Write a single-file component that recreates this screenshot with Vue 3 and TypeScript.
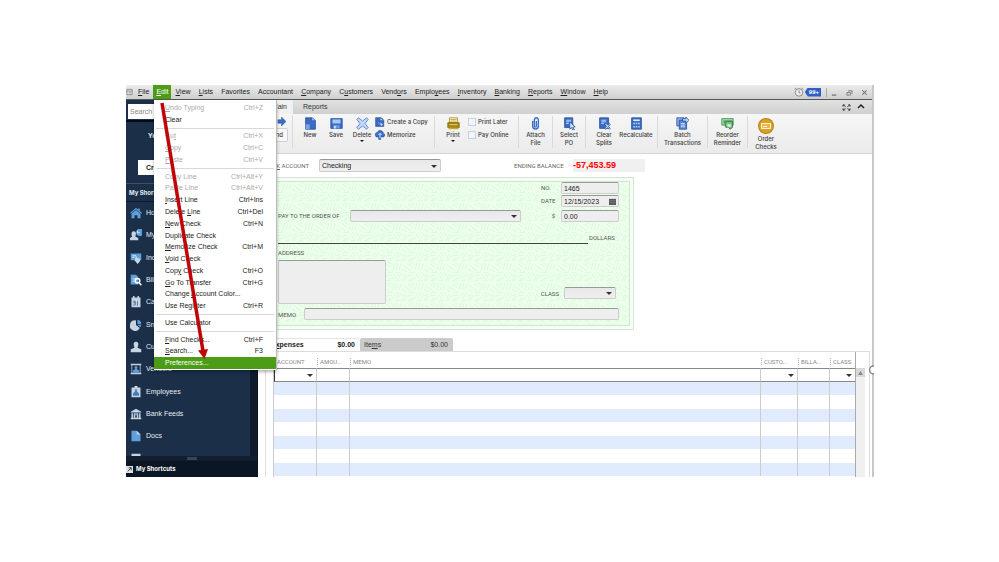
<script setup lang="ts">
import { ref } from 'vue'

interface Shape { d: string; f?: string; s?: string; w?: number }
interface MenuEntry { pre?: string; key?: string; post?: string; shortcut?: string; disabled?: boolean; active?: boolean; sep?: boolean }

const menus = [
  ['', 'F', 'ile'], ['', 'E', 'dit'], ['', 'V', 'iew'], ['', 'L', 'ists'], ['Favorites', '', ''],
  ['Accountant', '', ''], ['', 'C', 'ompany'], ['C', 'u', 'stomers'], ['Vend', 'o', 'rs'], ['Emplo', 'y', 'ees'],
  ['', 'I', 'nventory'], ['', 'B', 'anking'], ['', 'R', 'eports'], ['', 'W', 'indow'], ['', 'H', 'elp'],
]

const editMenu: MenuEntry[] = [
  { key: 'U', post: 'ndo Typing', shortcut: 'Ctrl+Z', disabled: true },
  { pre: 'Clear' },
  { sep: true },
  { pre: 'Cu', key: 't', shortcut: 'Ctrl+X', disabled: true },
  { key: 'C', post: 'opy', shortcut: 'Ctrl+C', disabled: true },
  { key: 'P', post: 'aste', shortcut: 'Ctrl+V', disabled: true },
  { sep: true },
  { pre: 'Copy Line', shortcut: 'Ctrl+Alt+Y', disabled: true },
  { pre: 'Paste Line', shortcut: 'Ctrl+Alt+V', disabled: true },
  { key: 'I', post: 'nsert Line', shortcut: 'Ctrl+Ins' },
  { pre: 'Delete ', key: 'L', post: 'ine', shortcut: 'Ctrl+Del' },
  { key: 'N', post: 'ew Check', shortcut: 'Ctrl+N' },
  { pre: 'Duplicate Check' },
  { key: 'M', post: 'emorize Check', shortcut: 'Ctrl+M' },
  { key: 'V', post: 'oid Check' },
  { pre: 'Cop', key: 'y', post: ' Check', shortcut: 'Ctrl+O' },
  { key: 'G', post: 'o To Transfer', shortcut: 'Ctrl+G' },
  { pre: 'Change ', key: 'A', post: 'ccount Color...' },
  { pre: 'Use Register', shortcut: 'Ctrl+R' },
  { sep: true },
  { pre: 'Use Calculator' },
  { sep: true },
  { key: 'F', post: 'ind Checks...', shortcut: 'Ctrl+F' },
  { key: 'S', post: 'earch...', shortcut: 'F3' },
  { pre: 'Preferences...', active: true },
]

const B = '#3b6cc4'
const D = '#24509f'
const L = '#dfeaff'
const tools: Record<string, Shape[]> = {
  fresh: [{ d: 'M2 1h8l4 3v11H2z', f: B, s: D }, { d: 'M10 1v3h4z', f: '#9dbcf0' }, { d: 'M2 9h5v6H2z', f: '#7ea4e6' }],
  save: [{ d: 'M1 2h14v12H1z', f: B, s: D }, { d: 'M3 3h10v5H3z', f: '#a9c6f5' }, { d: 'M4 10h8v4H4z', f: '#6e98de' }, { d: 'M5 11h2v3H5z', f: L }],
  remove: [{ d: 'M3 1l5 4 5-4 2 2-4 5 4 5-2 2-5-4-5 4-2-2 4-5-4-5z', f: '#c5daf9', s: '#4575c6' }],
  copy: [{ d: 'M1 1h9l4 4v10H1z', f: B, s: D }, { d: 'M8 1v5h5M5 8h3v6M6 11l3-3 4 4-3 3z', f: '#c6dafa', s: D }],
  memorize: [{ d: 'M2 11C-2 7 2 3 4 4c1-5 9-4 9 1 4 1 3 6 0 6H9v4H6v-4z', f: B, s: D }, { d: 'M8 4l4 4H9v5H7V8H4z', f: '#a7c5f6' }],
  print: [{ d: 'M3 1h10v6H3z', f: '#fffbe0', s: '#aa8c1a' }, { d: 'M4 3h8M4 5h8', s: '#b89a2b' }, { d: 'M1 7h14v6H1z', f: '#a8860f', s: '#816700' }, { d: 'M3 9h10v1H3z', f: '#f5e079' }, { d: 'M2 13h12v2H2z', f: '#c9a62c' }],
  attach: [{ d: 'M4.500 5v6c0 5 7 5 7 0V4c0-4-5-4-5 0v7c0 2 2.500 2 2.500 0V5', s: B, w: 1.7 }, { d: 'M5.500 6v5c0 3 5 3 5 0V4c0-2-3-2-3 0', s: '#a9c3f0', w: 0.6 }],
  select: [{ d: 'M2 1h10v12H2z', f: B, s: D }, { d: 'M4 4h6M4 6h6M4 8h3', s: L }, { d: 'M8 6l7 6-3 .5 2 3-2 .5-1.500-3-2 2z', f: '#d7e6ff', s: D }],
  clear: [{ d: 'M2 1h11v13H2z', f: B, s: D }, { d: 'M4 4h6M4 6h6M4 8h3', s: L }, { d: 'M8 9l2-1 2 2 2-2 1 1-2 2.500 2 2.500-1 1-2-2-2 2-2-1 2.500-2.500z', f: '#cfe0fc', s: D }],
  calc: [{ d: 'M2 1h12v14H2z', f: B, s: D }, { d: 'M4 3h8v2H4z', f: L }, { d: 'M4 7h2v2H4zM7 7h2v2H7zM10 7h2v2h-2zM4 11h2v2H4zM7 11h2v2H7zM10 11h2v2h-2z', f: '#b9d0f7' }],
  batch: [{ d: 'M1 1h9v10H1z', f: '#8fb0e8', s: D }, { d: 'M4 4h9v11H4z', f: '#5d87d2', s: D }, { d: 'M6 8h5M6 10h5M6 12h5', s: L }, { d: 'M8 2h4V0l4 4-4 4V5H8z', f: '#bcd3f8', s: D }],
  reorder: [{ d: 'M1 2h14v8H1z', f: '#a9dcb1', s: '#2f8a44' }, { d: 'M3 4h10v4H3z', f: '#4da861' }, { d: 'M5 8l3-3 1 1 5-1v8l-3 2-2-3-3 1z', f: '#80c58e', s: '#25703a' }, { d: 'M8 9h4v3H8z', f: '#def2e1' }],
  order: [{ d: 'M8 0a8 8 0 110 16A8 8 0 018 0z', f: '#b98113' }, { d: 'M8 1a7 7 0 110 14A7 7 0 018 1z', f: '#dda024' }, { d: 'M3.500 5.500h9v5h-9z', f: '#e7b84e', s: '#fff6da' }, { d: 'M5 8.500h4', s: '#fff6da' }],
}

const W = '#c5d3e2'
const S = '#5fa0dc'
const nav: { label: string; hidden?: boolean; icon: Shape[] }[] = [
  { label: 'Home', icon: [{ d: 'M0 8l8-7 3 2.500V2h2v3l3 3-1 1-7-6-7 6z', f: S }, { d: 'M2 9l6-5 6 5v6h-4v-4H6v4H2z', f: S }] },
  { label: 'My Company', icon: [{ d: 'M5 3a3 3 0 013 3c0 2-1 3-1 4l4 2v3H0v-3l3-2C2 9 2 8 2 6a3 3 0 013-3z', f: W }, { d: 'M11 0a5 5 0 110 9 5 5 0 010-9z', f: S }, { d: 'M10 2v3h3', s: '#fff' }] },
  { label: 'Income Tracker', icon: [{ d: 'M1 2h14v9H1z', f: S }, { d: 'M8 5l2 3 4 1-1 4-3 3-4-5z', f: W }, { d: 'M3 5h5M3 7h3', s: '#fff' }] },
  { label: 'Bill Tracker', icon: [{ d: 'M1 1h7l3 3v10H1z', f: S }, { d: 'M3 6h5M3 8h4M3 10h3', s: W }, { d: 'M10 6a3 3 0 110 6 3 3 0 010-6zM12 11l3 4', s: '#fff', w: 2 }] },
  { label: 'Calendar', icon: [{ d: 'M2 2h12v13H2zM4 0h2v3H4zM10 0h2v3h-2z', f: W }, { d: 'M4 7h3v2H5h2v3H4M10 7v6', s: '#35669a' }] },
  { label: 'Snapshots', icon: [{ d: 'M8 2v6l5 4A7 7 0 118 2z', f: W }, { d: 'M10 1a6 6 0 015 6h-5z', f: S }, { d: 'M10 8h5l-1 3z', f: S }] },
  { label: 'Customers', icon: [{ d: 'M8 1a3 3 0 013 4c0 2-1 3-1 4l5 2v4H1v-4l5-2C6 8 5 7 5 5a3 3 0 013-4z', f: W }] },
  { label: 'Vendors', icon: [{ d: 'M1 1h14v2H1zM2 3h1v12H2zM13 3h1v12h-1zM1 13h14v2H1z', f: W }, { d: 'M8 4a2 2 0 012 2l-1 2 3 2v3H4v-3l3-2-1-2a2 2 0 012-2z', f: S }] },
  { label: 'Employees', icon: [{ d: 'M2 2h4V0h4v2h4v13H2z', f: W }, { d: 'M8 4a2 2 0 011 3l3 3v3H4v-3l3-3a2 2 0 011-3z', f: '#3f7dbb' }] },
  { label: 'Bank Feeds', icon: [{ d: 'M8 1l7 4v1H1V5zM2 7h2v6H2zM5 7h2v6H5zM9 7h2v6H9zM12 7h2v6h-2zM1 13h14v2H1z', f: W }, { d: 'M8 6a2 2 0 110 4 2 2 0 010-4z', f: S }] },
  { label: 'Docs', icon: [{ d: 'M2 1h7l5 5v9H2z', f: S }, { d: 'M9 1v5h5z', f: W }] },
  { label: 'Reports', hidden: true, icon: [{ d: 'M2 1h12v14H2z', f: W }, { d: 'M4 5h8v2H4z', f: '#1b2f49' }] },
]

const account = ref('Checking')
const checkNo = ref('1465')
const checkDate = ref('12/15/2023')
const amount = ref('0.00')
const printLater = ref(false)
const payOnline = ref(false)
</script>

<template>
  <div class="page">
    <div class="window">
      <header class="menubar">
        <svg class="sys" viewBox="0 0 8 8" aria-hidden="true"><path d="M1 1h6v6H1zM1 3h6M3 5h3" fill="#eee" stroke="#888" /></svg>
        <nav class="menus">
          <button v-for="(m, i) in menus" :key="i" type="button" :class="{ open: i === 1 }">{{ m[0] }}<u>{{ m[1] }}</u>{{ m[2] }}</button>
        </nav>
        <div class="winctl">
          <svg class="clock" viewBox="0 0 12 12" aria-hidden="true"><circle cx="6" cy="6.500" r="4.500" fill="#eee" stroke="#777" /><path d="M6 4v3h2M1 3l2-2M11 3L9 1" fill="none" stroke="#777" /></svg>
          <span class="badge">99+</span>
          <i class="bar"></i>
          <button type="button" aria-label="Minimize"><svg viewBox="0 0 8 8"><path d="M1 7h5" stroke="#777" stroke-width="1.500" /></svg></button>
          <button type="button" aria-label="Restore"><svg viewBox="0 0 8 8"><path d="M1 4h4v3H1zM3 3V2h4v3H6" fill="none" stroke="#777" /></svg></button>
          <button type="button" aria-label="Close"><svg viewBox="0 0 8 8"><path d="M1.500 1.500l5 5M6.500 1.500l-5 5" stroke="#777" stroke-width="1.200" /></svg></button>
        </div>
      </header>

      <div class="body">
        <aside class="side">
          <div class="searchbox"><input type="text" placeholder="Search" aria-label="Search" /></div>
          <div class="promo">
            <p>Your Account</p>
            <button type="button">Create Invoice</button>
          </div>
          <h2>My Shortcuts</h2>
          <nav class="shortcuts">
            <div class="links">
              <a v-for="n in nav" :key="n.label" href="#" :aria-label="n.label">
                <svg viewBox="0 0 16 16" aria-hidden="true"><path v-for="(p, i) in n.icon" :key="i" :d="p.d" :fill="p.f || 'none'" :stroke="p.s || 'none'" :stroke-width="p.w || 1" /></svg>
                <span v-if="!n.hidden">{{ n.label }}</span>
              </a>
            </div>
          </nav>
          <div class="split"><i></i></div>
          <button type="button" class="foot">
            <svg viewBox="0 0 8 8" aria-hidden="true"><path d="M0 0h8v8H0z" fill="#dfe3e8" /><path d="M2 6l4-4M3 2h3v3" fill="none" stroke="#333" /></svg>My Shortcuts
          </button>
        </aside>

        <main class="main">
          <div class="tabs">
            <button type="button" class="on">Main</button>
            <button type="button">Reports</button>
            <svg class="expand" viewBox="0 0 10 8" aria-hidden="true"><path d="M1 3V1h2M7 1h2v2M9 5v2H7M3 7H1V5M1 1l3 2M9 1L6 3M1 7l3-2M9 7L6 5" fill="none" stroke="#333" /></svg>
            <svg class="up" viewBox="0 0 8 8" aria-hidden="true"><path d="M1 5l3-3 3 3" fill="none" stroke="#222" stroke-width="1.500" /></svg>
          </div>

          <div class="toolbar">
            <div class="group find">
              <svg viewBox="0 0 10 10" aria-hidden="true"><path d="M1 3h4V0l5 5-5 5V7H1z" fill="#3b6cc4" stroke="#24509f" stroke-width=".5" /></svg>
              <button type="button">Find</button>
            </div>
            <div class="group edit">
              <button v-for="t in [['fresh', 'New'], ['save', 'Save'], ['remove', 'Delete']]" :key="t[0]" type="button" class="tool">
                <svg viewBox="0 0 16 16"><path v-for="(p, i) in tools[t[0]]" :key="i" :d="p.d" :fill="p.f || 'none'" :stroke="p.s || 'none'" :stroke-width="p.w || 1" /></svg>
                <span>{{ t[1] }}</span><i v-if="t[1] === 'Delete'" class="caret"></i>
              </button>
              <div class="stack">
                <button v-for="t in [['copy', 'Create a Copy'], ['memorize', 'Memorize']]" :key="t[0]" type="button">
                  <svg viewBox="0 0 16 16"><path v-for="(p, i) in tools[t[0]]" :key="i" :d="p.d" :fill="p.f || 'none'" :stroke="p.s || 'none'" /></svg>{{ t[1] }}
                </button>
              </div>
            </div>
            <div class="group printing">
              <button type="button" class="tool">
                <svg viewBox="0 0 16 16"><path v-for="(p, i) in tools.print" :key="i" :d="p.d" :fill="p.f || 'none'" :stroke="p.s || 'none'" /></svg>
                <span>Print</span><i class="caret"></i>
              </button>
              <div class="stack">
                <label><input v-model="printLater" type="checkbox" />Print Later</label>
                <label><input v-model="payOnline" type="checkbox" />Pay Online</label>
              </div>
            </div>
            <div v-for="g in [[['attach', 'Attach', 'File']], [['select', 'Select', 'PO']], [['clear', 'Clear', 'Splits'], ['calc', 'Recalculate', '']], [['batch', 'Batch', 'Transactions']], [['reorder', 'Reorder', 'Reminder']], [['order', 'Order', 'Checks']]]" :key="g[0][0]" class="group mid" :class="{ pair: g.length > 1 }">
              <button v-for="t in g" :key="t[0]" type="button" class="tool" :class="{ big: t[0] === 'order' }">
                <svg viewBox="0 0 16 16"><path v-for="(p, i) in tools[t[0]]" :key="i" :d="p.d" :fill="p.f || 'none'" :stroke="p.s || 'none'" :stroke-width="p.w || 1" /></svg>
                <span>{{ t[1] }}</span><span>{{ t[2] }}</span>
              </button>
            </div>
          </div>

          <div class="acct">
            <label for="bank">BAN<u>K</u> ACCOUNT</label>
            <div class="sel"><select id="bank" v-model="account"><option>Checking</option></select></div>
            <span class="balance-label">ENDING BALANCE</span>
            <output>-57,453.59</output>
          </div>

          <section class="check">
            <div class="face">
              <svg class="texture" aria-hidden="true">
                <defs>
                  <pattern id="weave" width="22" height="20" patternUnits="userSpaceOnUse">
                    <path d="M1 2l5 3M3 0l5 3M0 6l4 3M10 1L8 8M13 1l-2 7M16 2l-2 6M18 3l4 3M17 7l5 3M2 11l6-1M1 14l6-1M3 17l6-1M11 10l4 5M9 12l4 5M14 10l4 4M20 12l-3 7M22 13l-3 6M10 19l5-1M1 19l5-1" fill="none" stroke="#daf5da" stroke-width=".8" />
                  </pattern>
                </defs>
                <rect width="100%" height="100%" fill="url(#weave)" />
              </svg>
              <div class="fields">
                <label class="c4 r1" for="no">NO.</label><input id="no" v-model="checkNo" class="c5 r1" type="text" />
                <label class="c4 r2" for="date">DATE</label>
                <div class="date c5 r2"><input id="date" v-model="checkDate" type="text" /><svg viewBox="0 0 8 8" aria-hidden="true"><path d="M0 1h8v7H0z" fill="#555" /><path d="M0 3h8M0 5h8M2.500 2v6M5.500 2v6" stroke="#888" stroke-width=".5" /></svg></div>
                <label class="c1 r3" for="payee">PAY TO THE ORDER OF</label>
                <div class="sel c2 r3"><select id="payee"></select></div>
                <label class="c4 r3 dollar" for="amt">$</label><input id="amt" v-model="amount" class="c5 r3" type="text" />
              </div>
              <div class="words"><i></i><span>DOLLARS</span></div>
              <div class="lower">
                <div class="addr"><label for="addr">ADDRESS</label><textarea id="addr"></textarea></div>
                <div class="class"><label for="cls">CLASS</label><div class="sel"><select id="cls"></select></div></div>
              </div>
              <div class="memo"><label for="memo">MEMO</label><input id="memo" type="text" /></div>
            </div>
          </section>

          <div class="pages">
            <button type="button" class="on"><span>E<u>x</u>penses</span><span>$0.00</span></button>
            <button type="button"><span>Ite<u>m</u>s</span><span>$0.00</span></button>
          </div>

          <section class="grid">
            <div class="lines">
              <table>
                <colgroup><col class="w-acc" /><col class="w-amt" /><col /><col class="w-cus" /><col class="w-bil" /><col class="w-cls" /></colgroup>
                <thead>
                  <tr><th>ACCOUNT</th><th>AMOU...</th><th>MEMO</th><th>CUSTO...</th><th>BILLA...</th><th>CLASS</th></tr>
                </thead>
                <tbody>
                  <tr class="entry">
                    <td><div class="sel"><select aria-label="Account"></select></div></td>
                    <td></td><td></td>
                    <td><div class="sel"><select aria-label="Customer"></select></div></td>
                    <td></td>
                    <td><div class="sel"><select aria-label="Class"></select></div></td>
                  </tr>
                  <tr v-for="r in 7" :key="r" :class="r % 2 ? 'tint' : 'plain'"><td v-for="c in 6" :key="c"></td></tr>
                </tbody>
              </table>
            </div>
            <div class="scroll"><i></i></div>
          </section>
        </main>
      </div>

      <div class="dropdown" role="menu">
        <template v-for="(e, i) in editMenu" :key="i">
          <hr v-if="e.sep" />
          <button v-else type="button" role="menuitem" :class="{ active: e.active }" :disabled="e.disabled">
            <span>{{ e.pre }}<u>{{ e.key }}</u>{{ e.post }}</span><span>{{ e.shortcut }}</span>
          </button>
        </template>
      </div>
      <svg class="pointer" viewBox="0 0 60 262" aria-hidden="true"><path d="M8 2L49 250" stroke="#c00508" stroke-width="3.500" /><path d="M44 249.500L54 248 50.500 258z" fill="#c00508" /></svg>
      <svg class="handle" viewBox="0 0 6 10" aria-hidden="true"><circle cx="5.500" cy="5" r="4" fill="#fff" stroke="#888" stroke-width="1.500" /></svg>
    </div>
  </div>
</template>

<style>
body { margin: 0; background: #fff; }
</style>

<style scoped>
* { box-sizing: border-box; }
.page { min-height: 100vh; padding: 85px 125px 85px 126px; font: 7px/8px "Liberation Sans", Arial, sans-serif; color: #333; }
button, input, select, textarea { font: inherit; color: inherit; margin: 0; padding: 0; border: 0; background: none; border-radius: 0; outline: 0; }
button { white-space: nowrap; }
u { text-underline-offset: 1px; text-decoration-thickness: 1px; }
svg { display: block; flex: none; }
.window { position: relative; border-right: 2px solid #c8c8c8; }

.menubar { display: flex; align-items: center; height: 15px; background: linear-gradient(#ececec, #cfcfcf); border-bottom: 1px solid #555; }
.sys { width: 7px; height: 8px; }
.menus { display: flex; justify-content: space-between; width: 478px; height: 14px; margin-left: 1px; }
.menus button { padding: 0 4px; color: #222; }
.menus .open { background: #4c9c17; color: #fff; padding: 0 3px; }
.winctl { display: flex; align-items: center; margin-left: auto; margin-right: 3px; }
.winctl button { width: 8px; height: 8px; margin-left: 7px; }
.winctl button svg { width: 7px; height: 7px; }
.clock { width: 10px; height: 10px; }
.badge { margin: 0 5px 0 1px; padding: 0 2px 0 4px; background: #2f5fc4; color: #fff; font-size: 6px; font-weight: bold; line-height: 9px; clip-path: polygon(0 50%, 3px 0, 100% 0, 100% 100%, 3px 100%); }
.bar { width: 1px; height: 9px; background: #aaa; margin-right: -3px; }

.body { display: flex; align-items: stretch; }
.side { width: 132px; flex: none; display: flex; flex-direction: column; background: #1b2f49; color: #e8edf3; border-right: 1px solid #0a1420; }
.searchbox { padding: 4px 4px 3px 2px; height: 22px; border-bottom: 2px solid #050b14; }
.searchbox input { width: 100%; height: 15px; padding-left: 2px; background: #fff; color: #333; }
.searchbox input::placeholder { color: #888; opacity: 1; }
.promo { height: 61px; padding: 10px 12px 0; }
.promo p { margin: 0 0 0 10px; font-weight: bold; }
.promo button { display: block; width: 100%; height: 15px; margin-top: 20px; padding-left: 8px; background: #fff; color: #222; text-align: left; font-weight: bold; }
.side h2 { margin: 0; height: 19px; padding-left: 3px; border-top: 1px solid #3a506c; border-bottom: 1px solid #0c1a2c; font: bold 6px/17px Inter, sans-serif; }
.shortcuts { height: 254px; overflow: hidden; background: linear-gradient(90deg, transparent 124px, #0e1b2c 124px); }
.links { display: grid; grid-auto-rows: 1fr; height: 268px; }
.links a { display: flex; align-items: center; gap: 4px; padding-left: 4px; color: inherit; text-decoration: none; white-space: nowrap; }
.links svg { width: 12px; height: 12px; }
.split { display: flex; justify-content: center; align-items: center; height: 5px; background: #131f2f; }
.split i { width: 10px; height: 3px; background: #33465e; }
.foot { display: flex; align-items: center; gap: 3px; height: 16px; background: #0b1624; color: #fff; font: bold 6px/8px Inter, sans-serif; }
.foot svg { width: 7px; height: 7px; }

.main { flex: 1; min-width: 0; display: flex; flex-direction: column; background: #fff; }
.tabs { display: flex; align-items: center; height: 14px; background: linear-gradient(#e2e2e2, #cfcfcf); }
.tabs button { height: 14px; padding: 0 10px; }
.tabs .on { width: 35px; padding: 0 6px 0 0; text-align: right; background: #f1f1f1; }
.expand { width: 9px; height: 7px; margin-left: auto; }
.up { width: 8px; height: 8px; margin: 0 7px 0 6px; }

.toolbar { display: grid; grid-template-columns: 35px 142px 84px 34px 33px 72px 50px 40px 36px; height: 40px; padding: 2px 0 5px; background: linear-gradient(#f6f6f6, #ebebeb); border-bottom: 1px solid #d5d5d5; font: 500 6px/8px Inter, sans-serif; color: #3a3a3a; }
.group { display: flex; align-items: flex-start; border-right: 1px solid #d9d9d9; height: 32px; }
.group:last-child { border: 0; }
.find { flex-direction: column; align-items: flex-end; gap: 2px; padding: 1px 4px 0 0; }
.find svg { width: 9px; height: 9px; margin-right: 2px; }
.find button { width: 30px; height: 14px; padding-right: 4px; border: 1px solid #d0d0d0; border-radius: 2px; background: #f8f8f8; text-align: right; }
.edit { padding-left: 4px; }
.printing { padding-left: 5px; }
.mid { justify-content: center; }
.pair { justify-content: flex-start; padding-left: 2px; }
.tool { display: flex; flex-direction: column; align-items: center; width: 26px; }
.mid .tool { width: 32px; }
.tool svg { width: 13px; height: 13px; margin: 1px 0; }
.tool.big { padding-top: 1px; }
.tool.big svg { width: 16px; height: 16px; margin-bottom: 1px; }
.tool span { flex: none; }
.caret { border: 2px solid transparent; border-top-color: #111; border-bottom: 0; margin-top: 1px; }
.stack { display: flex; flex-direction: column; gap: 2px; }
.stack button, .stack label { display: flex; align-items: center; gap: 2px; height: 11px; white-space: nowrap; }
.stack svg { width: 10px; height: 10px; }
.stack input { appearance: none; width: 8px; height: 8px; border: 1px solid #c3d0e8; background: #f2f6ff; }
.printing .stack { padding-left: 2px; }

.acct { display: flex; align-items: center; height: 23px; font: 6px/8px Roboto, sans-serif; color: #666; white-space: nowrap; }
.acct label { width: 61px; padding-right: 10px; display: flex; justify-content: flex-end; white-space: pre; }
.sel { position: relative; height: 12px; border: 1px solid #ccc; border-top-color: #999; border-radius: 2px; background: linear-gradient(#e8e8e8, #efefef); font: 7px/8px "Liberation Sans", sans-serif; color: #222; }
.sel select { display: block; appearance: none; width: 100%; height: 100%; padding: 0 10px 0 2px; }
.sel::after { content: ""; position: absolute; right: 3px; top: 50%; margin-top: -1px; border: 3px solid transparent; border-top-color: #333; border-bottom: 0; pointer-events: none; }
.acct .sel { width: 122px; height: 13px; }
.balance-label { width: 59px; margin-left: 73px; }
.acct output { width: 72px; height: 13px; background: #f0f0f0; color: #f00; font: bold 9px/13px "Liberation Sans", sans-serif; }

.check { width: 364px; margin-left: 12px; padding: 3px; border: 1px solid #dcdcdc; background: #f2fff2; }
.face { position: relative; padding: 0 10px 5px 3px; border: 1px solid #cfe6cf; background: #ebffeb; font: 6px/7px Roboto, sans-serif; color: #555; }
.face > div { position: relative; }
.texture { position: absolute; inset: 0; width: 100%; height: 100%; }
.face input, .face textarea { width: 100%; height: 12px; padding: 0 2px; border: 1px solid #ccc; border-top-color: #999; border-radius: 2px; background: #eee; font: 7px/8px "Liberation Sans", sans-serif; color: #222; }
.fields { display: grid; grid-template-columns: 72px 171px 1fr 20px 58px; grid-template-rows: 13px 15px 12px; align-items: start; }
.fields label { line-height: 12px; white-space: nowrap; }
.c1 { grid-column: 1; } .c2 { grid-column: 2; } .c4 { grid-column: 4; } .c5 { grid-column: 5; }
.r1 { grid-row: 1; } .r2 { grid-row: 2; } .r3 { grid-row: 3; }
.dollar { text-align: right; padding-right: 6px; }
.date { position: relative; }
.date svg { position: absolute; right: 3px; top: 3px; width: 7px; height: 7px; }
.date input { display: block; }
.words { display: flex; align-items: flex-end; height: 22px; }
.words i { flex: 1; height: 1px; background: #444; }
.words span { width: 31px; padding: 0 0 3px 1px; }
.lower { display: flex; justify-content: space-between; align-items: flex-end; height: 60px; padding-right: 3px; }
.addr { width: 108px; }
.addr label { display: block; margin-bottom: 4px; }
.addr textarea { display: block; height: 44px; resize: none; }
.class { display: flex; align-items: center; gap: 5px; padding-bottom: 5px; }
.class .sel { width: 52px; }
.memo { display: flex; align-items: center; padding-top: 4px; }
.memo label { width: 26px; flex: none; }

.pages { display: flex; height: 21px; padding: 8px 0 0 8px; gap: 1px; line-height: 13px; }
.pages button { display: flex; justify-content: space-between; width: 93px; padding: 0 5px 0 4px; background: #cbcbcb; border-radius: 2px 2px 0 0; }
.pages .on { background: #fff; font-weight: bold; color: #222; padding: 0 4px 0 5px; border-top: 1px solid #e4e4e4; line-height: 12px; }

.grid { flex: 1; display: flex; margin: 0 2px 0 7px; padding: 0 4px 0 7px; border: 1px solid #ddd; border-bottom: 0; }
.lines { flex: 1; min-width: 0; border-right: 1px solid #aaa; border-left: 1px solid #ccc; }
table { width: 100%; border-spacing: 0; table-layout: fixed; }
.w-acc { width: 43px; } .w-amt { width: 33px; } .w-cus { width: 37px; } .w-bil { width: 32px; } .w-cls { width: 25px; }
th { height: 16px; padding: 4px 0 0 3px; font: 6px/8px Roboto, sans-serif; color: #888; text-align: left; white-space: nowrap; background: repeating-linear-gradient(#aaa 0 1px, transparent 1px 2px) 0 6px / 1px 7px no-repeat; }
th:first-child { background: none; }
td { padding: 0; height: 13px; border-right: 1px solid #ccc; }
td:last-child { border-right: 0; }
.plain td { height: 14px; }
.entry td { height: 14px; border-top: 1px solid #888; border-bottom: 1px solid #888; }
.entry .sel { border: 0; height: 11px; background: none; }
.entry td:first-child { border-left: 1px solid #333; }
.tint { background: #e0ecfd; }
.scroll { width: 9px; margin-top: 16px; background: #f0f0f0; }
.scroll i { display: block; height: 9px; background: #d8d8d8; padding: 3px 2px; }
.scroll i::before { content: ""; display: block; width: 5px; height: 4px; background: #888; clip-path: polygon(50% 0, 100% 100%, 0 100%); }

.dropdown { position: absolute; left: 28px; top: 15px; display: flex; flex-direction: column; width: 123px; height: 270px; padding: 2px 1px 1px; background: #fff; border-right: 1px solid #bbb; box-shadow: 0 2px 3px rgba(0, 0, 0, .3); }
.dropdown button { display: flex; flex: 1; justify-content: space-between; align-items: center; padding: 0 12px 0 10px; color: #222; }
.dropdown button:disabled { color: #aaa; }
.dropdown .active { background: #4c9c17; color: #fff; margin: 0 -1px; padding-left: 11px; }
.dropdown hr { flex: none; width: calc(100% - 2px); height: 1px; margin: 2px 1px; border: 0; background: #d8d8d8; }
.pointer { position: absolute; left: 28px; top: 16px; width: 60px; height: 262px; pointer-events: none; }
.handle { position: absolute; right: -2px; top: 280px; width: 6px; height: 10px; }
</style>
